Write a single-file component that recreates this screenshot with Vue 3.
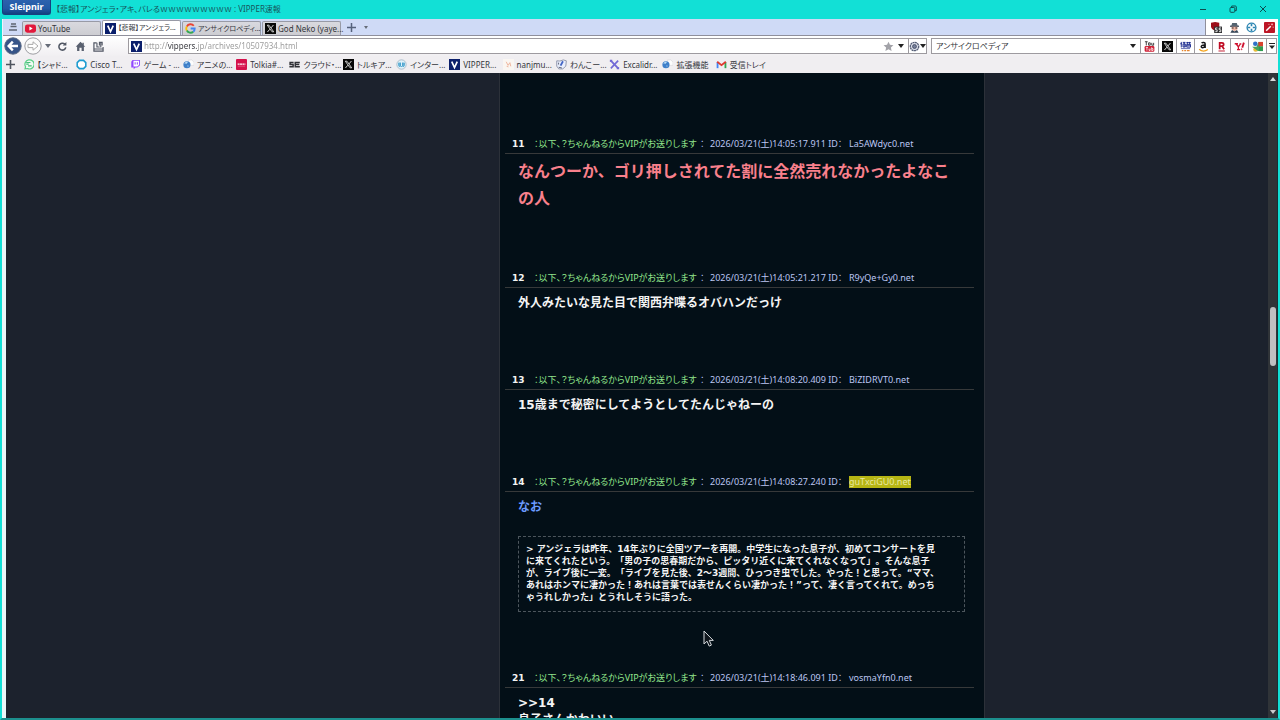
<script setup>
import { ref } from 'vue'

const address = ref('http://vippers.jp/archives/10507934.html')
const query = ref('アンサイクロペディア')

const tabs = [
  { icon: 'youtube', label: 'YouTube' },
  { icon: 'vip', label: '【悲報】アンジェラ...', active: true, ja: true },
  { icon: 'google', label: 'アンサイクロペディ...', ja: true },
  { icon: 'x', label: 'God Neko (yaye...' },
]

const bookmarks = [
  { icon: 'chat', label: '【シャド...' },
  { icon: 'ring', label: 'Cisco T...' },
  { icon: 'twitch', label: 'ゲーム - ...' },
  { icon: 'globe', label: 'アニメの...' },
  { icon: 'red', label: 'Tolkia#...' },
  { icon: 'sc', label: 'クラウド・...' },
  { icon: 'x', label: 'トルキア...' },
  { icon: 'archive', label: 'インター...' },
  { icon: 'vip', label: 'VIPPER...' },
  { icon: 'nanj', label: 'nanjmu...' },
  { icon: 'dog', label: 'わんこー...' },
  { icon: 'excali', label: 'Excalidr...' },
  { icon: 'globe', label: '拡張機能' },
  { icon: 'gmail', label: '受信トレイ' },
]

const engines = ['yt', 'x', 'kakaku', 'amazon', 'rakuten', 'yahoo', 'maps']
const extensions = ['shield', 'agent', 'target', 'wand']

const posts = [
  { no: 11, time: '2026/03/21(土)14:05:17.911', id: 'La5AWdyc0.net', kind: 'large', text: 'なんつーか、ゴリ押しされてた割に全然売れなかったよなこの人' },
  { no: 12, time: '2026/03/21(土)14:05:21.217', id: 'R9yQe+Gy0.net', kind: 'plain', text: '外人みたいな見た目で関西弁喋るオバハンだっけ' },
  { no: 13, time: '2026/03/21(土)14:08:20.409', id: 'BiZIDRVT0.net', kind: 'plain', text: '15歳まで秘密にしてようとしてたんじゃねーの' },
  {
    no: 14, time: '2026/03/21(土)14:08:27.240', id: 'guTxciGU0.net', kind: 'blue', marked: true, text: 'なお',
    quote: [
      '> アンジェラは昨年、14年ぶりに全国ツアーを再開。中学生になった息子が、初めてコンサートを見',
      'に来てくれたという。「男の子の思春期だから、ピッタリ近くに来てくれなくなって」。そんな息子',
      'が、ライブ後に一変。「ライブを見た後、2～3週間、ひっつき虫でした。やった！と思って。“ママ、',
      'あれはホンマに凄かった！あれは言葉では表せんくらい凄かった！”って、凄く言ってくれて。めっち',
      'ゃうれしかった」とうれしそうに語った。',
    ].join('\n'),
  },
  { no: 21, time: '2026/03/21(土)14:18:46.091', id: 'vosmaYfn0.net', kind: 'plain', text: '>>14\n息子さんかわいい' },
]
</script>

<template>
  <div class="window">
    <svg class="defs" aria-hidden="true">
      <symbol id="i-youtube" viewBox="0 0 12 12"><rect y="1.5" width="12" height="9" rx="2.5" fill="#e2183c" /><path d="M4.8 3.9v4.2L8.4 6z" fill="#fff" /></symbol>
      <symbol id="i-vip" viewBox="0 0 12 12"><rect width="12" height="12" fill="#0b1f6b" /><path d="M3 2.8l3 6.6 3-6.6" fill="none" stroke="#fff" stroke-width="1.8" /></symbol>
      <symbol id="i-google" viewBox="0 0 12 12" fill="none" stroke-width="2"><path d="M9.6 3A4.6 4.6 0 0 0 2 3.8" stroke="#ea4335" /><path d="M2 3.8a4.6 4.6 0 0 0 0 4.5" stroke="#fbbc05" /><path d="M2 8.2a4.6 4.6 0 0 0 7 1.4" stroke="#34a853" /><path d="M9 9.6A4.6 4.6 0 0 0 10.6 6H6.2" stroke="#4285f4" /></symbol>
      <symbol id="i-x" viewBox="0 0 12 12"><rect width="12" height="12" fill="#080808" /><path d="M2.5 2.4h1.8l5.2 7.2H7.7z" fill="none" stroke="#eee" stroke-width=".9" /><path d="M9.2 2.2L6.6 5.3M5.3 6.8L2.7 9.8" stroke="#eee" /></symbol>
      <symbol id="i-chat" viewBox="0 0 12 12"><path d="M2.2 10.8l.6-2.4A5 5 0 1 1 5 10.4z" fill="#effbf3" stroke="#58cf86" stroke-width="1.3" /><path d="M3.5 3.8h4.6M3.5 5.6h2.8M5.5 7.5h4" stroke="#45be78" stroke-width="1.2" /></symbol>
      <symbol id="i-ring" viewBox="0 0 12 12"><path d="M3.8 1.5h4.4L10.7 4v4l-2.5 2.5H3.8L1.3 8V4z" fill="#fff" stroke="#1b9bd0" stroke-width="1.7" /></symbol>
      <symbol id="i-twitch" viewBox="0 0 12 12"><path d="M2.8 1h8v6L8 9.4H6L4 11.2V9.4H1.4V3z" fill="#9146ff" /><path d="M3.8 2h6v4.6L8 8.2H3.8z" fill="#fff" /><path d="M5.6 3.5v2.6M8 3.5v2.6" stroke="#9146ff" stroke-width="1.1" /></symbol>
      <symbol id="i-globe" viewBox="0 0 12 12"><path d="M6 1h3.5L12 3.2V7H7z" fill="#fdfdfd" stroke="#d4d4d8" stroke-width=".6" /><circle cx="4.3" cy="6.3" r="3.9" fill="#3e7fc9" /><path d="M1.5 5.3c1-2.4 2.7-2.6 3.8-1.7L4 5.2 2.8 5z" fill="#b7dcf7" /><path d="M4.5 6.8l2 .5-1.2 1.7z" fill="#8fbce8" /></symbol>
      <symbol id="i-red" viewBox="0 0 12 12"><rect width="12" height="12" rx="1" fill="#d5114c" /><path d="M1.8 5.6h8.4" stroke="#fff" stroke-width="1.6" stroke-dasharray="2.2 .4" /><path d="M2 7.8h8" stroke="#ee88a8" stroke-width=".6" /></symbol>
      <symbol id="i-sc" viewBox="0 0 12 12" fill="none" stroke="#303035" stroke-width="1.6"><path d="M5 3.7H1.2V6h3.3v2.4H.4" /><path d="M11.8 3.7H6.8v4.7h5M7 6h4.2" /></symbol>
      <symbol id="i-archive" viewBox="0 0 12 12"><circle cx="6" cy="6" r="5.1" fill="#dff2fa" stroke="#a8bac8" /><path d="M3 4v3c0 1.6 1.5 1.6 1.5 0V4v3c0 1.6 3 1.6 3 0V4v3c0 1.6 1.5 1.6 1.5 0V4" fill="none" stroke="#2c93c5" /></symbol>
      <symbol id="i-nanj" viewBox="0 0 12 12"><rect width="12" height="12" fill="#faf6f2" /><path d="M3.5 3l2 4 2-3 1 4M4 8l2 .6" stroke="#eeb199" fill="none" /></symbol>
      <symbol id="i-dog" viewBox="0 0 12 12"><path d="M.8 2l3.4.2L8 1l3.3 1-.6 5.8-3.3 3H3L.8 7.8z" fill="#e9eefc" stroke="#8c93a8" /><path d="M7.6 2.4L5 7.2" stroke="#4264c4" stroke-width="2" /><path d="M3 9l3.4.8M2.8 4v2" stroke="#555c70" /></symbol>
      <symbol id="i-excali" viewBox="0 0 12 12" stroke="#7169d6" fill="none"><path d="M2 1.8l8 8.4" stroke-width="2" /><path d="M10 1.8L2 10.2" stroke-width="1.8" /><path d="M1.5 3.3V1.5h2M10.5 8.7v1.8h-2" stroke-width="1.1" /></symbol>
      <symbol id="i-gmail" viewBox="0 0 12 12" fill="none" stroke-width="2"><path d="M1.7 10V3.2" stroke="#4285f4" /><path d="M10.3 10V3.2" stroke="#34a853" /><path d="M1.3 3L6 6.7 10.7 3" stroke="#df3b30" /></symbol>
      <symbol id="i-yt" viewBox="0 0 12 12"><path d="M1 .8h3M2.5 .8v4M5 2v2.6h1.8V2zM8.5 2v2.6h2V2" stroke="#222" fill="none" stroke-width=".9" /><rect x=".7" y="5.4" width="10.6" height="6.2" rx="1.3" fill="#cf2036" /><path d="M2 7h2.4M3.2 7v3.5M5.5 8.3v2h1.2v-2M8.4 6.8v3.6h1.4V8.3H8.4" stroke="#fff" fill="none" stroke-width=".8" /></symbol>
      <symbol id="i-kakaku" viewBox="0 0 12 12" stroke="#16268c" fill="none"><path d="M1.4 1v6M.3 3h2M3 1.5h3M3.3 3.2h2.5v3.4H3.3zM4.6 1.5v5M7 1.8h4.8M8 1v2.7M10.5 1v2.7M7.3 3.7h4.2v3H7.3zM7.3 5.2h4.2" /><path d="M1 8.3h10" stroke="#5b66b0" /><path d="M2 10.5h1.6M4.6 10.5h2M7.5 10.5h3" stroke="#e5852e" stroke-width="1.6" /></symbol>
      <symbol id="i-amazon" viewBox="0 0 12 12" fill="none"><path d="M4 2.4c.7-1.2 3.8-1.2 3.8.5v4.8M7.5 4.3c-5-.3-4.7 3.3-2.3 3 1.3-.1 2.3-1 2.3-2" stroke="#16161a" stroke-width="1.6" /><path d="M1.2 9c3 2.4 6.7 2.3 9.6.2" stroke="#f3a21c" stroke-width="1.3" /></symbol>
      <symbol id="i-rakuten" viewBox="0 0 12 12" fill="none" stroke="#c00d25"><path d="M4 9V2h2.4c2.6 0 2.6 3.5 0 3.5H4M6.4 5.5L8.9 9" stroke-width="1.9" /><path d="M2.7 10.9h7" stroke-width="1" /></symbol>
      <symbol id="i-yahoo" viewBox="0 0 12 12" fill="none" stroke="#cf1230"><path d="M.8 3h3.5M2.2 3l2.6 3.3v3M3.3 9.4h3.2M7 3.2L4.8 6.3M6 3.2h2" stroke-width="1.4" /><path d="M10.8 1.8L9 7.2" stroke-width="2" /><circle cx="8.3" cy="9" r=".5" /></symbol>
      <symbol id="i-maps" viewBox="0 0 12 12"><circle cx="3.6" cy="3" r="2.5" fill="#2f71c9" /><circle cx="4" cy="9.2" r="2.6" fill="#e8bb35" /><path d="M0 6.2h5L7 1h1.4v10H6.5z" fill="#48a45e" /><path d="M7 1h5v5H7z" fill="#d8432f" /><path d="M7.6 5.8H12V11H7.6z" fill="#2e9b4f" /></symbol>
      <symbol id="i-shield" viewBox="0 0 12 12"><path d="M0 .7L4.5 0 9 .7v3.8C9 7 6.5 8.4 4.5 9.2 2 8.4 0 7 0 4.5z" fill="#9c0d18" /><rect x="3.5" y="5" width="8.5" height="7" fill="#2e2e30" /><path d="M7 6.5H5v2h1.7v2H4.7M11 6.5H9v2h1.7v2H8.7" fill="none" stroke="#fff" stroke-width=".9" /></symbol>
      <symbol id="i-agent" viewBox="0 0 12 12"><path d="M2.5 4L3.5 1h5l1 3z" fill="#53626f" /><path d="M1.2 4.6h9.6" stroke="#293645" stroke-width="1.4" /><path d="M2.8 5.3h6.4v3L6 10 2.8 8.3z" fill="#efb5a3" /><path d="M3 6.5h2M7 6.5h2" stroke="#222" stroke-width="1.2" /><path d="M1.5 11.6l1.8-3L6 10.3l2.7-1.7 1.8 3z" fill="#344354" /></symbol>
      <symbol id="i-target" viewBox="0 0 12 12" fill="none" stroke="#2d86b2"><circle cx="6" cy="6" r="4.8" stroke-width="1.5" /><path d="M6 2v2.6M6 7.4V10M2 6h2.6M7.4 6H10" stroke-width="1.8" /></symbol>
      <symbol id="i-wand" viewBox="0 0 12 12"><rect width="12" height="12" rx="1" fill="#bd1626" /><path d="M2.4 9.6l5-5" stroke="#fff" stroke-width="1.6" /><path d="M8.8 1.5v2.2M7.7 2.6h2.2M10 5v1.4M5.4 2v1.2" stroke="#f7b5b5" stroke-width=".9" /></symbol>
    </svg>

    <header class="titlebar">
      <button class="brand" type="button">Sleipnir</button>
      <span class="title">【悲報】アンジェラ・アキ、バレるｗｗｗｗｗｗｗｗｗ : VIPPER速報</span>
      <div class="controls">
        <button type="button" aria-label="最小化"><svg viewBox="0 0 10 10"><path d="M2 5.5h6" /></svg></button>
        <button type="button" aria-label="元に戻す"><svg viewBox="0 0 10 10"><rect x="2" y="3.5" width="4.8" height="4.8" rx="1" /><path d="M3.7 3.3V2h3.6a1 1 0 0 1 1 1v3.6H7" /></svg></button>
        <button type="button" aria-label="閉じる"><svg viewBox="0 0 10 10"><path d="M2 2l6 6M8 2L2 8" /></svg></button>
      </div>
    </header>

    <div class="chrome">
      <nav class="tabstrip" aria-label="タブ">
        <button class="stack" type="button" aria-label="タブ一覧"><svg width="10" height="10" viewBox="0 0 10 10"><path d="M3 2h5M2.5 4.5h6M1 8h8" stroke="#5d6472" stroke-width="1.3" fill="none" /></svg></button>
        <button v-for="t in tabs" :key="t.label" class="tab" :class="{ active: t.active, ja: t.ja }" type="button">
          <svg class="ico"><use :href="'#i-' + t.icon" /></svg><span>{{ t.label }}</span>
        </button>
        <button class="newtab" type="button" aria-label="新しいタブ"><svg width="9" height="9" viewBox="0 0 9 9"><path d="M4.5 0v9M0 4.5h9" stroke="#56627c" stroke-width="1.5" /></svg></button>
        <button class="tabmenu" type="button" aria-label="タブメニュー"><i class="caret small"></i></button>
        <div class="extensions">
          <button v-for="e in extensions" :key="e" type="button" :aria-label="e"><svg class="ico"><use :href="'#i-' + e" /></svg></button>
        </div>
      </nav>

      <div class="toolbar">
        <button class="round" type="button" aria-label="戻る"><svg viewBox="0 0 18 18"><circle cx="9" cy="9" r="8.2" fill="#365488" stroke="#596984" /><path d="M14 9H5M8.8 4.7L4.7 9l4.1 4.3" fill="none" stroke="#fff" stroke-width="2.4" /></svg></button>
        <button class="round" type="button" aria-label="進む"><svg viewBox="0 0 18 18"><circle cx="9" cy="9" r="8.2" fill="#fafafa" stroke="#9d9da2" /><path d="M4 7.4h5V4.8L14 9l-5 4.2v-2.6H4z" fill="#fff" stroke="#aaa" /></svg></button>
        <button class="history" type="button" aria-label="履歴"><i class="caret"></i></button>
        <button class="tool" type="button" aria-label="再読み込み"><svg viewBox="0 0 12 12"><path d="M9.6 7A3.8 3.8 0 1 1 8.5 3.4" fill="none" stroke="#515764" stroke-width="1.7" /><path d="M6.2 4.8h4V1z" fill="#515764" /></svg></button>
        <button class="tool" type="button" aria-label="ホーム"><svg viewBox="0 0 12 12"><path d="M6 .9L.8 6.2h1.5v4.6h2.5V7.4h2.4v3.4h2.5V6.2h1.5L9.6 4.5V1.8H8.2v1.3z" fill="#59606f" /></svg></button>
        <button class="tool" type="button" aria-label="保存"><svg viewBox="0 0 12 12"><path d="M4 2H1v9h10V6.5M1 8.7h10" fill="none" stroke="#515764" stroke-width="1.3" /><path d="M4.3 2v4.5h3M7 5V1.5h3V5M8.5 1v6" fill="none" stroke="#515764" stroke-width="1.2" /></svg></button>
        <div class="address">
          <svg class="ico"><use href="#i-vip" /></svg>
          <input v-model="address" type="text" aria-label="アドレス" />
          <button class="star" type="button" aria-label="お気に入り"><svg viewBox="0 0 12 12"><path d="M6 .7l1.6 3.5 3.8.4-2.8 2.6.8 3.8L6 9.1 2.6 11l.8-3.8L.6 4.6l3.8-.4z" fill="#a2a2a8" /></svg></button>
          <button class="drop" type="button" aria-label="アドレス履歴"><i class="caret dark"></i></button>
          <button class="gear" type="button" aria-label="エンジン切替"><svg viewBox="0 0 12 12"><circle cx="6" cy="6" r="4.6" fill="#d8dce8" stroke="#555e76" stroke-width="1.4" stroke-dasharray="2.2 .5" /><circle cx="6" cy="6" r="2.1" fill="#77819d" stroke="#454d64" /></svg><i class="caret dark"></i></button>
        </div>
        <div class="search">
          <input v-model="query" type="text" aria-label="検索" />
          <button class="drop" type="button" aria-label="検索履歴"><i class="caret dark"></i></button>
          <button v-for="e in engines" :key="e" class="engine" type="button" :aria-label="e"><svg class="ico"><use :href="'#i-' + e" /></svg></button>
          <button class="more" type="button" aria-label="その他"><svg width="6" height="6" viewBox="0 0 6 6"><path d="M0 .5h6" stroke="#222" /><path d="M0 2.5h6L3 6z" fill="#222" /></svg></button>
        </div>
      </div>

      <nav class="bookmarks" aria-label="ブックマーク">
        <button class="add" type="button" aria-label="追加"><svg width="9" height="9" viewBox="0 0 9 9"><path d="M4.5 0v9M0 4.5h9" stroke="#4e545e" stroke-width="1.6" /></svg></button>
        <div class="links">
          <a v-for="b in bookmarks" :key="b.label" href="#"><svg class="ico"><use :href="'#i-' + b.icon" /></svg><span>{{ b.label }}</span></a>
        </div>
      </nav>
    </div>

    <div class="view">
      <main class="page">
        <div class="column">
          <article v-for="p in posts" :key="p.no" :class="['post', p.kind, { quoted: p.quote }]">
            <div class="meta">
              <b>{{ p.no }}</b>
              <span class="name">：以下、？ちゃんねるからVIPがお送りします</span>
              <span class="colon">：</span>
              <span class="time">{{ p.time }} ID：</span>
              <span class="id"><mark v-if="p.marked">{{ p.id }}</mark><template v-else>{{ p.id }}</template></span>
            </div>
            <div class="body">{{ p.text }}</div>
            <blockquote v-if="p.quote">{{ p.quote }}</blockquote>
          </article>
        </div>
      </main>
      <div class="scrollbar" aria-hidden="true">
        <i class="up"></i>
        <div class="track"><div class="thumb"></div></div>
        <i class="down"></i>
      </div>
    </div>

    <svg class="pointer" viewBox="0 0 11 17" aria-hidden="true"><path d="M1 1v13l3-2.8 2.2 4.9 2.2-1-2.1-4.7h4z" fill="#10161c" stroke="#d4d8dc" /></svg>
  </div>
</template>

<style>
body { margin: 0; overflow: hidden; }
</style>

<style scoped>
* { box-sizing: border-box; }
.window {
  position: relative;
  display: flex;
  flex-direction: column;
  height: 100vh;
  border: 0 solid #12e0d6;
  border-width: 0 2px;
  background: #12e0d6;
  border-bottom: 2px solid #1c8f8d;
  font: 8px/12px "Noto Sans", "Noto Sans CJK JP", sans-serif;
  font-feature-settings: "palt";
  color: #34363c;
}
.defs { position: absolute; width: 0; height: 0; }
button { display: flex; align-items: center; justify-content: center; padding: 0; border: 0; background: none; font: inherit; font-feature-settings: inherit; color: inherit; }
input { min-width: 0; padding: 0; border: 0; outline: 0; background: none; font: inherit; font-feature-settings: inherit; color: inherit; }
.ico { display: block; flex: none; width: 11px; height: 11px; }
.caret { display: block; border: 3px solid transparent; border-top: 4px solid #666c78; border-bottom: 0; }
.caret.small { border-width: 3px 2px 0; }
.caret.dark { border-top-color: #222; }

.titlebar { display: flex; flex: none; height: 19px; }
.brand {
  width: 49px; height: 15px;
  border: 1px solid #17407f; border-top: 0; border-radius: 0 0 3px 3px;
  background: linear-gradient(#2c62ae, #225aa5 60%, #124080);
  color: #fff; font: bold 9px/12px "Noto Sans", sans-serif;
}
.title { flex: 1; margin-left: 5px; line-height: 18px; white-space: nowrap; color: #17555c; }
.controls { display: flex; }
.controls button { width: 30px; height: 18px; }
.controls svg { width: 10px; height: 10px; fill: none; stroke: #0c4d50; stroke-width: 1; }

.chrome { flex: none; border-left: 1px solid #eef4fb; background: #f0eef1; }
.tabstrip { display: flex; align-items: flex-end; height: 17px; border-bottom: 1px solid #8f8f9b; background: #cfdaf6; }
.stack { width: 19px; height: 16px; }
.tab {
  justify-content: flex-start;
  gap: 2px;
  width: 79px; height: 14px;
  margin-right: 1px; padding: 0 2px;
  border: 1px solid #989aa6; border-bottom: 0; border-radius: 2px 2px 0 0;
  background: linear-gradient(#d9d9df, #cdcdd2);
  white-space: nowrap;
}
.tab.ja { font-size: 7px; }
.tab.active { height: 15px; background: #fff; }
.newtab { width: 18px; height: 15px; }
.tabmenu { width: 11px; height: 15px; }
.extensions { display: flex; align-self: stretch; justify-content: space-between; width: 73px; margin-left: auto; padding: 0 3px 0 5px; border-left: 1px solid #8f8f9b; background: #fff; }

.toolbar { display: flex; align-items: center; height: 20px; padding-right: 1px; background: linear-gradient(#fff, #f1eff2); }
.round { width: 20px; height: 18px; }
.round svg { width: 18px; height: 18px; }
.history { width: 10px; height: 18px; }
.tool { width: 18px; height: 18px; }
.tool svg { width: 11px; height: 11px; }
.address, .search { display: flex; align-items: center; height: 16px; border: 1px solid #9d9a9f; background: #fff; }
.address { flex: 800; margin: 0 4px 0 21px; padding-left: 2px; }
.address input {
  flex: 1; margin-left: 2px;
  background: linear-gradient(90deg, #999 23px, #33343a 23px 54px, #999 54px);
  background-clip: text;
  color: transparent;
}
.star svg { width: 11px; height: 11px; }
.drop { width: 14px; height: 14px; }
.gear { width: 18px; height: 14px; border-left: 1px solid #9d9a9f; }
.gear svg { width: 11px; height: 11px; }
.search { flex: 346; }
.search input { flex: 1; padding-left: 4px; }
.engine { width: 18px; height: 14px; border-left: 1px solid #9d9a9f; }
.more { width: 10px; height: 14px; border-left: 1px solid #9d9a9f; }

.bookmarks { display: flex; align-items: center; height: 17px; }
.add { width: 14px; margin-right: 6px; }
.links { display: grid; grid-template-columns: repeat(14, 1fr); width: 746px; }
.links a { display: flex; align-items: center; gap: 3px; min-width: 0; color: inherit; text-decoration: none; white-space: nowrap; }

.view { display: flex; flex: 1; min-height: 0; border-left: 4px solid #eaf6f8; border-right: 1px solid #173136; background: #1c222d; }
.page { display: flex; flex: 1; justify-content: center; overflow: hidden; padding-left: 210px; }
.column { width: 486px; height: 100%; padding: 61px 10px 0 5px; border: 0 solid #2c3139; border-width: 0 1px; background: #030f17; overflow: hidden; }
.post { padding-bottom: 58px; color: #f4f4f4; font: bold 12px/17px "DejaVu Sans", "Noto Sans CJK JP", sans-serif; font-feature-settings: normal; }
.post.large, .post.quoted { padding-bottom: 56px; }
.meta {
  display: flex; align-items: center;
  height: 20px; padding-left: 7px;
  border-bottom: 1px solid #37393a;
  font: 9px/12px "Noto Sans", "Noto Sans CJK JP", sans-serif;
  font-feature-settings: "palt";
  white-space: nowrap;
  color: #bcc6f2;
}
.meta b { width: 22px; color: #f4f4f4; font: bold 9px/12px "DejaVu Sans", sans-serif; }
.name { width: 166px; color: #92e68c; }
.colon { width: 10px; }
.time { width: 139px; }
mark { display: inline-block; background: #b6b514; color: #e8e8a0; }
.body { padding: 7px 9px 0 13px; white-space: pre-line; }
.large .body { padding-top: 4px; color: #f9808c; font-size: 16px; line-height: 27px; }
.blue .body { color: #6c9bff; }
blockquote {
  margin: 20px 9px 0 13px; padding: 6px 7px 8px;
  border: 1px dashed #4d565d;
  font-size: 9px; line-height: 12px;
  white-space: pre;
  text-spacing-trim: space-all;
}

.scrollbar { display: flex; flex-direction: column; align-items: center; width: 9px; background: #303438; }
.up { margin: 4px 0; border: 3px solid transparent; border-top: 0; border-bottom: 4px solid #d8dadc; }
.down { margin: 4px 0; border: 3px solid transparent; border-bottom: 0; border-top: 4px solid #c8cacc; }
.track { flex: 1; display: flex; flex-direction: column; }
.track::before { content: ""; flex: 222; }
.track::after { content: ""; flex: 340; }
.thumb { flex: 59; width: 6px; border-radius: 3px; background: #bfbfc1; }

.pointer { position: absolute; left: 701px; top: 630px; width: 11px; height: 17px; }
</style>
